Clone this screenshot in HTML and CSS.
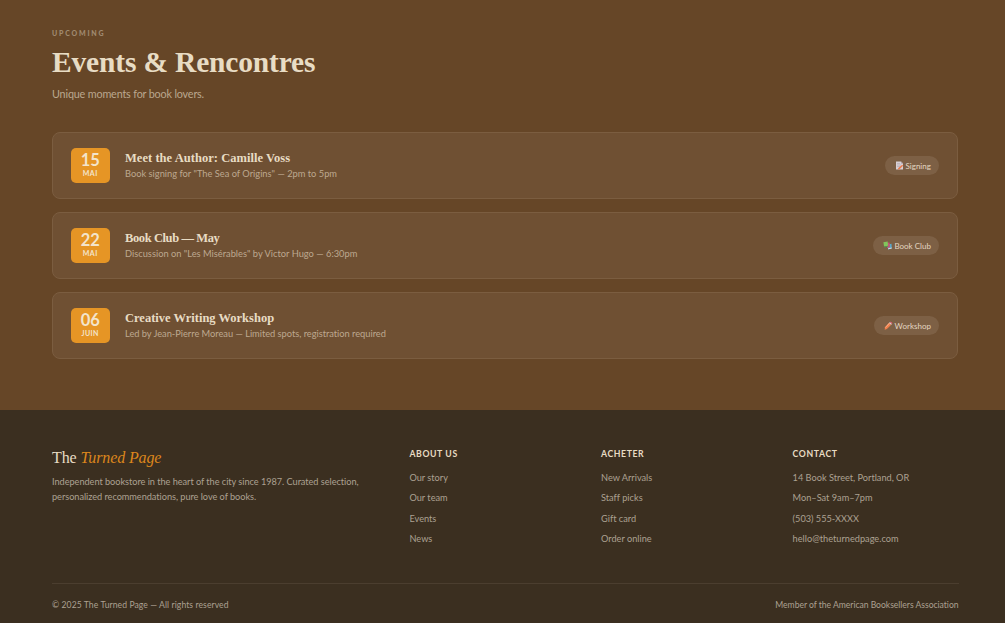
FILE: index.html
```html
<!DOCTYPE html>
<html lang="en">
<head>
<meta charset="UTF-8">
<meta name="viewport" content="width=device-width, initial-scale=1.0">
<title>The Turned Page</title>
<link rel="stylesheet" href="styles.css">
</head>
<body>
  <section class="events" id="events">
    <p class="eyebrow">Upcoming</p>
    <h2 class="title">Events &amp; Rencontres</h2>
    <p class="subtitle">Unique moments for book lovers.</p>
    <div class="event-list">
      <article class="event">
        <div class="date"><span class="day">15</span><span class="month">Mai</span></div>
        <div class="info">
          <h3 class="name-author">Meet the Author: Camille Voss</h3>
          <p>Book signing for "The Sea of Origins" — 2pm to 5pm</p>
        </div>
        <span class="tag">
          <svg class="icon" viewBox="0 0 9 9"><path fill="#d8d0d4" d="M1 .5h5l2 2v6H1z"/><path fill="#a99ba5" d="M6 .5v2h2zM2 2.3h3v.5H2zM2 3.8h4v.5H2zM2 5.3h3v.5H2z"/><path fill="#e8784a" d="M7.2 3.8l.9.9-3.3 3.4-2 .6.5-1.7z"/></svg>
          <span>Signing</span>
        </span>
      </article>
      <article class="event">
        <div class="date"><span class="day">22</span><span class="month">Mai</span></div>
        <div class="info">
          <h3 class="name-club">Book Club — May</h3>
          <p>Discussion on "Les Misérables" by Victor Hugo — 6:30pm</p>
        </div>
        <span class="tag">
          <svg class="icon" viewBox="0 0 9 9"><path fill="#58a9cc" d="M4.5 3.5l4-.7.3 4.7-3.7.9z"/><path fill="#e6e0dc" d="M5 7.4l3.7-.8v.8L5.1 8.2z"/><path fill="#c6527c" d="M3 2l3.4-.4.8 4.6-3 .9z"/><path fill="#82c45c" d="M.4 1.2L4.6.5l.6 4.3-4.1.8z"/><path fill="#4d9a52" d="M1.1 5.6l4.1-.8v.8l-3.9.8z"/></svg>
          <span>Book Club</span>
        </span>
      </article>
      <article class="event">
        <div class="date"><span class="day">06</span><span class="month">Juin</span></div>
        <div class="info">
          <h3 class="name-workshop">Creative Writing Workshop</h3>
          <p class="long">Led by Jean-Pierre Moreau — Limited spots, registration required</p>
        </div>
        <span class="tag">
          <svg class="icon" viewBox="0 0 9 9"><path fill="#f0804c" d="M5.2 1.8l2 2-4.3 4.3-2.3.6.5-2.5z"/><path fill="#ffb08a" d="M5.2 1.8l.6.6-4.3 4.4-.4-.6z"/><path fill="#d8d8dc" d="M5.2 1.8l.8-.8 2 2-.8.8z"/><path fill="#e5596a" d="M6 1c.9-1 3.1.9 2 2z"/></svg>
          <span>Workshop</span>
        </span>
      </article>
    </div>
  </section>
  <footer class="footer">
    <div class="footer-grid">
      <div class="brand">
        <p class="logo">The <em>Turned Page</em></p>
        <p class="about">Independent bookstore in the heart of the city since 1987. Curated selection,<br>personalized recommendations, pure love of books.</p>
      </div>
      <div class="column">
        <h4>About us</h4>
        <ul><li>Our story</li><li>Our team</li><li>Events</li><li>News</li></ul>
      </div>
      <div class="column">
        <h4>Acheter</h4>
        <ul><li>New Arrivals</li><li>Staff picks</li><li>Gift card</li><li>Order online</li></ul>
      </div>
      <div class="column">
        <h4>Contact</h4>
        <ul><li>14 Book Street, Portland, OR</li><li>Mon–Sat 9am–7pm</li><li>(503) 555-XXXX</li><li>hello@theturnedpage.com</li></ul>
      </div>
    </div>
    <div class="footer-bottom">
      <span class="copyright">© 2025 The Turned Page — All rights reserved</span>
      <span class="member">Member of the American Booksellers Association</span>
    </div>
  </footer>
</body>
</html>
```
FILE: styles.css
```css
* { box-sizing: border-box; margin: 0; padding: 0; }
body { background: #664627; color: #e8dcc4; font-family: Lato, "Open Sans", sans-serif; font-variant-ligatures: none; overflow: hidden; }
ul { list-style: none; }
.events { height: 410px; padding: 28px 46.6px 0 52px; }
.eyebrow { font-size: 7px; line-height: 11px; font-weight: 900; letter-spacing: 1.8px; text-transform: uppercase; color: #a08a70; }
.title { margin-top: 6px; font-family: "Liberation Serif", serif; font-size: 29.5px; line-height: 34px; font-weight: 700; letter-spacing: -.17px; }
.subtitle { margin-top: 7px; font-size: 10.8px; line-height: 16px; letter-spacing: -.17px; color: #bba88f; }
.event-list { display: flex; flex-direction: column; gap: 13px; margin-top: 30px; }
.event { display: flex; align-items: center; height: 67px; padding: 0 18px; background: #6f5033; border: 1px solid #7b5d40; border-radius: 8px; }
.date { display: flex; flex-direction: column; align-items: center; width: 38.5px; height: 35px; padding-top: 3px; background: #e69525; border-radius: 5px; color: #f3e4cb; }
.day { font-size: 16.5px; line-height: 18px; font-weight: 700; }
.month { font-size: 7px; line-height: 8px; font-weight: 700; letter-spacing: .4px; text-transform: uppercase; }
.info { flex: 1; margin-left: 15.5px; }
.info h3 { font-family: "Liberation Serif", serif; font-size: 12.5px; line-height: 16px; font-weight: 700; }
.info .name-author { letter-spacing: .04px; }
.info .name-club { letter-spacing: -.4px; }
.info p { font-size: 9.3px; line-height: 16px; color: #bda890; }
.info .long { letter-spacing: -.03px; }
.tag { display: flex; align-items: center; gap: 2px; height: 19px; padding: 0 8.5px 0 10px; background: #7d6045; border-radius: 10px; font-size: 8px; color: #e3d6c2; }
.icon { width: 9px; height: 9px; }
.footer { height: 213px; padding: 38px 46.5px 0 52px; background: #3b2f20; }
.footer-grid { display: grid; grid-template-columns: 2fr 1fr 1fr 1fr; gap: 25.7px; height: 135px; }
.logo { font-family: "Liberation Serif", serif; font-size: 16px; line-height: 20px; letter-spacing: -.12px; }
.logo em { color: #dc861c; }
.about { margin-top: 6px; font-size: 9.2px; line-height: 15.4px; letter-spacing: -.04px; white-space: nowrap; color: #aca192; }
.column h4 { font-size: 8.7px; line-height: 12px; letter-spacing: .6px; text-transform: uppercase; }
.column ul { margin-top: 8px; }
.column li { font-size: 9.2px; line-height: 20.4px; white-space: nowrap; color: #aca192; }
.footer-bottom { display: flex; justify-content: space-between; padding-top: 15px; border-top: 1px solid #4b3e2f; font-size: 8.6px; line-height: 12px; color: #aca192; }
.copyright { letter-spacing: .08px; }
.member { letter-spacing: -.03px; }
```
